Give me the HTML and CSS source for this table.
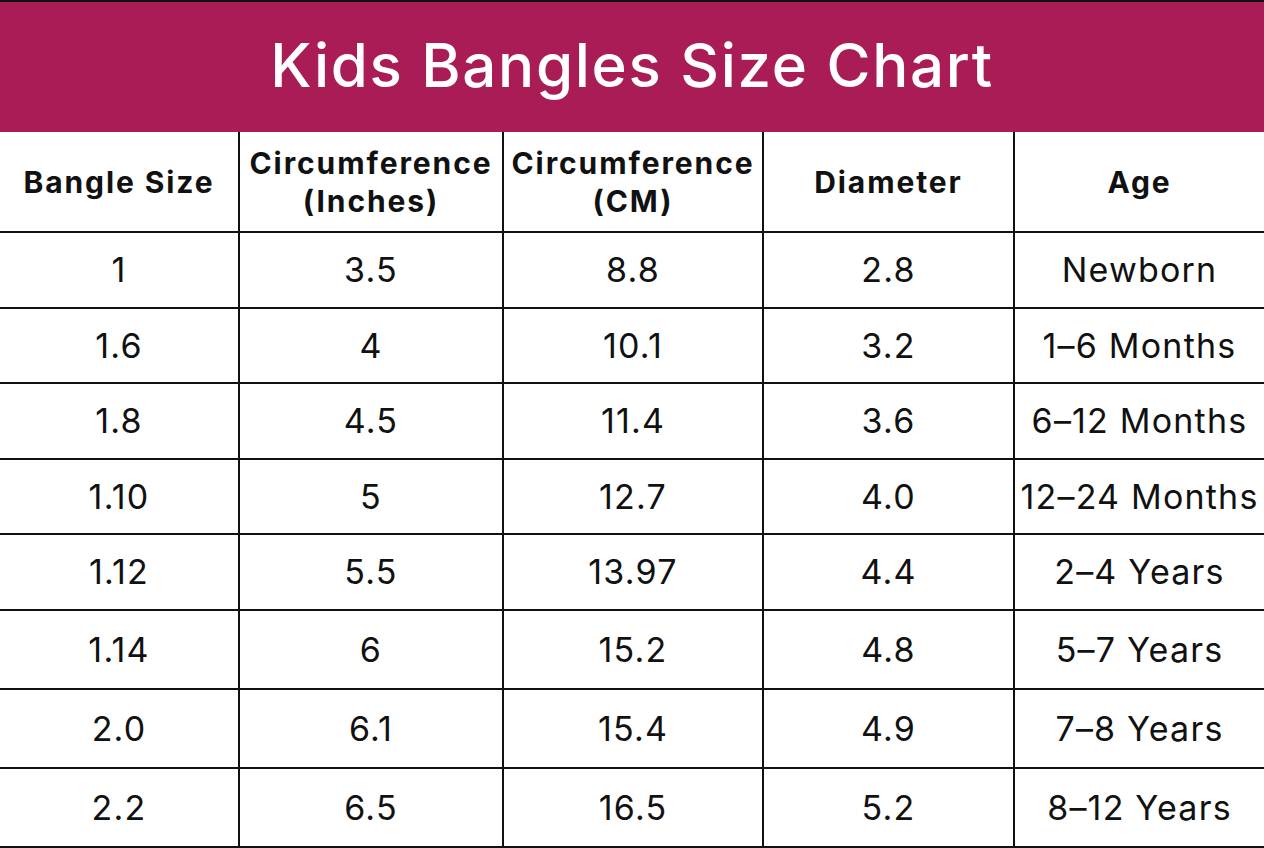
FILE: index.html
```html
<!DOCTYPE html>
<html lang="en">
<head>
<meta charset="utf-8">
<title>Kids Bangles Size Chart</title>
<link rel="stylesheet" href="styles.css">
</head>
<body>
<div class="chart">
  <header class="banner"><h1 class="title">Kids Bangles Size Chart</h1></header>
  <table class="sizes">
    <colgroup>
      <col class="c1"><col class="c2"><col class="c3"><col class="c4"><col class="c5">
    </colgroup>
    <thead>
      <tr class="head-row">
        <th>Bangle Size</th>
        <th>Circumference<br>(Inches)</th>
        <th>Circumference<br>(CM)</th>
        <th>Diameter</th>
        <th>Age</th>
      </tr>
    </thead>
    <tbody>
      <tr class="r76"><td>1</td><td>3.5</td><td>8.8</td><td>2.8</td><td>Newborn</td></tr>
      <tr class="r75"><td>1.6</td><td>4</td><td>10.1</td><td>3.2</td><td>1–6 Months</td></tr>
      <tr class="r76"><td>1.8</td><td>4.5</td><td>11.4</td><td>3.6</td><td>6–12 Months</td></tr>
      <tr class="r75"><td>1.10</td><td>5</td><td>12.7</td><td>4.0</td><td>12–24 Months</td></tr>
      <tr class="r76"><td>1.12</td><td>5.5</td><td>13.97</td><td>4.4</td><td>2–4 Years</td></tr>
      <tr class="r79"><td>1.14</td><td>6</td><td>15.2</td><td>4.8</td><td>5–7 Years</td></tr>
      <tr class="r79"><td>2.0</td><td>6.1</td><td>15.4</td><td>4.9</td><td>7–8 Years</td></tr>
      <tr class="r79"><td>2.2</td><td>6.5</td><td>16.5</td><td>5.2</td><td>8–12 Years</td></tr>
    </tbody>
  </table>
</div>
</body>
</html>
```

FILE: styles.css
```css
html, body {
  margin: 0;
  padding: 0;
  background: #ffffff;
}

body {
  font-family: "Inter", "Lato", "Liberation Sans", sans-serif;
  color: #111111;
  width: 1264px;
  height: 848px;
  overflow: hidden;
}

.chart {
  border-top: 2px solid #111111;
}

.banner {
  background: #a91c55;
  height: 130px;
  display: flex;
  align-items: center;
  justify-content: center;
}

.title {
  margin: 0;
  color: #ffffff;
  font-family: "Inter", "Lato", sans-serif;
  font-weight: 500;
  font-size: 60px;
  letter-spacing: 1.7px;
  line-height: 1;
  padding-bottom: 4px;
}

.sizes {
  width: 1264px;
  border-collapse: collapse;
  table-layout: fixed;
  border-bottom: 2px solid #111111;
}

.c1 { width: 239px; }
.c2 { width: 264px; }
.c3 { width: 260px; }
.c4 { width: 251px; }
.c5 { width: 250px; }

.sizes th,
.sizes td {
  border: 2px solid #111111;
  text-align: center;
  vertical-align: middle;
  padding: 0;
  white-space: nowrap;
}

.sizes tr > :first-child { border-left: none; }
.sizes tr > :last-child { border-right: none; }

.sizes thead th {
  border-top: none;
  font-weight: 700;
  font-size: 30px;
  line-height: 38px;
  letter-spacing: 1.9px;
}

.head-row { height: 100px; }
.r75 { height: 75px; }
.r76 { height: 76px; }
.r79 { height: 79px; }

.sizes td {
  font-size: 34px;
  font-weight: 400;
  line-height: 1;
  letter-spacing: 1.2px;
}
```
